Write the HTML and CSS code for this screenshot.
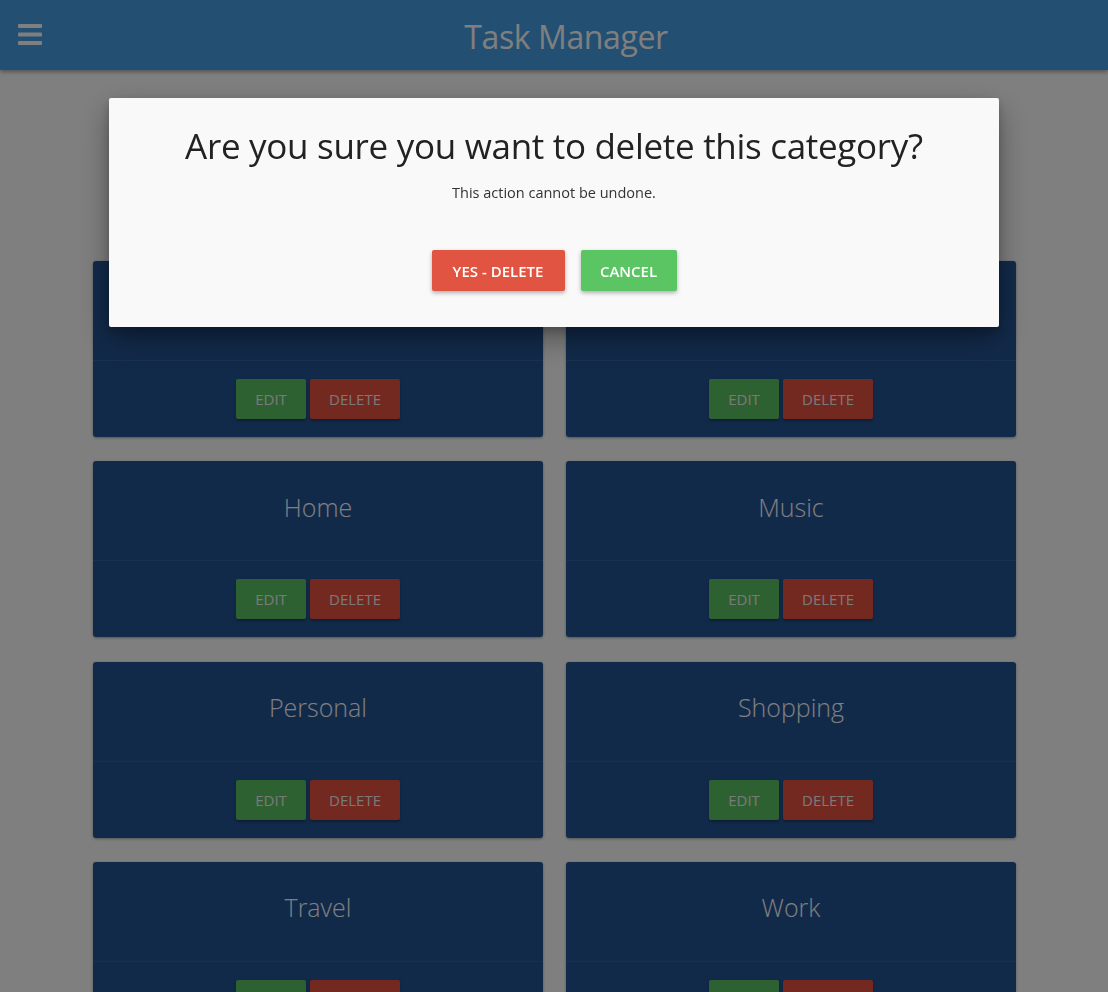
FILE: index.html
```html
<!DOCTYPE html>
<html lang="en">
<head>
<meta charset="utf-8">
<title>Task Manager</title>
<link rel="stylesheet" href="styles.css">
</head>
<body>
<header class="topbar">
  <button class="menu-btn" aria-label="Menu">
    <svg width="24" height="22" viewBox="0 0 24 22"><rect x="0" y="1" width="24" height="4" rx="1"/><rect x="0" y="9.5" width="24" height="4" rx="1"/><rect x="0" y="18" width="24" height="4" rx="1"/></svg>
  </button>
  <h1 class="app-title">Task Manager</h1>
</header>

<main class="content">
  <div class="grid">
    <div class="card"><div class="card-title">Fitness</div><div class="card-actions"><button class="btn btn-edit">EDIT</button><button class="btn btn-delete">DELETE</button></div></div>
    <div class="card"><div class="card-title">Finance</div><div class="card-actions"><button class="btn btn-edit">EDIT</button><button class="btn btn-delete">DELETE</button></div></div>
    <div class="card"><div class="card-title">Home</div><div class="card-actions"><button class="btn btn-edit">EDIT</button><button class="btn btn-delete">DELETE</button></div></div>
    <div class="card"><div class="card-title">Music</div><div class="card-actions"><button class="btn btn-edit">EDIT</button><button class="btn btn-delete">DELETE</button></div></div>
    <div class="card"><div class="card-title">Personal</div><div class="card-actions"><button class="btn btn-edit">EDIT</button><button class="btn btn-delete">DELETE</button></div></div>
    <div class="card"><div class="card-title">Shopping</div><div class="card-actions"><button class="btn btn-edit">EDIT</button><button class="btn btn-delete">DELETE</button></div></div>
    <div class="card"><div class="card-title">Travel</div><div class="card-actions"><button class="btn btn-edit">EDIT</button><button class="btn btn-delete">DELETE</button></div></div>
    <div class="card"><div class="card-title">Work</div><div class="card-actions"><button class="btn btn-edit">EDIT</button><button class="btn btn-delete">DELETE</button></div></div>
  </div>
</main>

<div class="overlay">
  <div class="modal">
    <h2 class="modal-title">Are you sure you want to delete this category?</h2>
    <p class="modal-text">This action cannot be undone.</p>
    <div class="modal-actions">
      <button class="mbtn mbtn-danger">YES - DELETE</button>
      <button class="mbtn mbtn-ok">CANCEL</button>
    </div>
  </div>
</div>
</body>
</html>
```

FILE: styles.css
```css
* { box-sizing: border-box; }
html, body { margin: 0; padding: 0; }
body {
  background: #ffffff;
  font-family: "Open Sans", "Noto Sans", "Liberation Sans", sans-serif;
  height: 992px;
  overflow: hidden;
}
.topbar {
  height: 70px;
  background: #469ee6;
  box-shadow: 0 2px 4px rgba(0,0,0,0.35);
  display: flex;
  align-items: center;
  justify-content: center;
  position: relative;
}
.menu-btn {
  position: absolute;
  left: 18px;
  top: 23px;
  background: none;
  border: 0;
  padding: 0;
  line-height: 0;
}
.menu-btn svg { fill: #ffffff; }
.app-title {
  margin: 0 0 0 24px;
  color: #ffffff;
  font-weight: 400;
  font-size: 32px;
  letter-spacing: -0.4px;
  padding-top: 2px;
}
.content {
  padding-top: 191px;
  display: flex;
  justify-content: center;
}
.grid {
  display: grid;
  grid-template-columns: 450px 450px;
  column-gap: 23px;
  row-gap: 24.3px;
  margin-left: 1px;
}
.card {
  background: #245494;
  border-radius: 3px;
  box-shadow: 0 1px 3px rgba(0,0,0,0.35);
  height: 176px;
  display: flex;
  flex-direction: column;
}
.card-title {
  height: 100px;
  display: flex;
  align-items: center;
  justify-content: center;
  color: #ffffff;
  font-weight: 300;
  font-size: 25px;
  border-bottom: 1px solid rgba(255,255,255,0.08);
  padding-bottom: 8px;
}
.card-actions {
  display: flex;
  justify-content: center;
  gap: 4px;
  padding-top: 18px;
}
.btn {
  height: 40px;
  border: 0;
  border-radius: 2px;
  color: #f2f2f2;
  font-family: inherit;
  font-size: 15px;
  box-shadow: 0 2px 3px rgba(0,0,0,0.3);
}
.btn-edit { background: #5cc363; width: 70px; }
.btn-delete { background: #e65240; width: 90px; }

.overlay {
  position: fixed;
  inset: 0;
  background: rgba(0,0,0,0.5);
}
.modal {
  position: absolute;
  top: 98px;
  left: 109px;
  width: 890px;
  height: 229px;
  background: #f9f9f9;
  border-radius: 2px;
  box-shadow: 0 12px 30px rgba(0,0,0,0.35), 0 4px 10px rgba(0,0,0,0.2);
  text-align: center;
  padding-top: 24px;
}
.modal-title {
  margin: 0;
  font-weight: 400;
  font-size: 35px;
  color: #222;
  letter-spacing: -0.3px;
  line-height: 48px;
}
.modal-text {
  margin: 13px 0 0;
  font-size: 14.5px;
  color: #333;
}
.modal-actions {
  margin-top: 48px;
  display: flex;
  justify-content: center;
  gap: 16px;
}
.mbtn {
  height: 41px;
  border: 0;
  border-radius: 2px;
  color: #ffffff;
  font-family: inherit;
  font-size: 15px;
  font-weight: 600;
  box-shadow: 0 2px 4px rgba(0,0,0,0.3);
}
.mbtn-danger { background: #e25442; width: 133px; }
.mbtn-ok { background: #5bc563; width: 96px; }
```
